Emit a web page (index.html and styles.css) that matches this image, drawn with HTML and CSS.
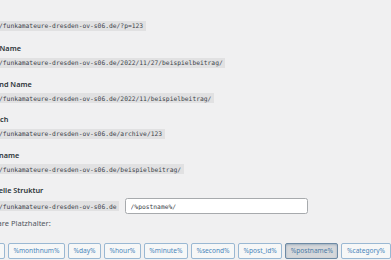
FILE: index.html
```
<!DOCTYPE html>
<html lang="de">
<head>
	<meta charset="UTF-8">
	<title>Permalink-Einstellungen</title>
	<link rel="stylesheet" href="styles.css">
</head>
<body>
	<div class="wrap">
		<fieldset class="structures">
			<div class="row">
				<label><input type="radio" name="selection">Einfach</label>
				<p><code>https://funkamateure-dresden-ov-s06.de/?p=123</code></p>
			</div>
			<div class="row">
				<label><input type="radio" name="selection">Tag und Name</label>
				<p><code>https://funkamateure-dresden-ov-s06.de/2022/11/27/beispielbeitrag/</code></p>
			</div>
			<div class="row">
				<label><input type="radio" name="selection">Monat und Name</label>
				<p><code>https://funkamateure-dresden-ov-s06.de/2022/11/beispielbeitrag/</code></p>
			</div>
			<div class="row">
				<label><input type="radio" name="selection">Numerisch</label>
				<p><code>https://funkamateure-dresden-ov-s06.de/archive/123</code></p>
			</div>
			<div class="row">
				<label><input type="radio" name="selection">Beitragsname</label>
				<p><code>https://funkamateure-dresden-ov-s06.de/beispielbeitrag/</code></p>
			</div>
			<div class="row custom">
				<label><input type="radio" name="selection" checked>Individuelle Struktur</label>
				<p class="custom-line"><code>https://funkamateure-dresden-ov-s06.de</code><input type="text" class="structure" value="/%postname%/"></p>
			</div>
			<div class="tags">
				<p class="tags-title">Verfügbare Platzhalter:</p>
				<ul>
					<li><button>%year%</button></li>
					<li><button>%monthnum%</button></li>
					<li><button>%day%</button></li>
					<li><button>%hour%</button></li>
					<li><button>%minute%</button></li>
					<li><button>%second%</button></li>
					<li><button>%post_id%</button></li>
					<li><button class="active">%postname%</button></li>
					<li><button>%category%</button></li>
					<li><button>%author%</button></li>
				</ul>
			</div>
		</fieldset>
	</div>
</body>
</html>
```

FILE: styles.css
```
*{margin: 0;padding: 0;box-sizing: border-box;}
html,body{height: 100%;}
body{background: #f0f0f1;overflow: hidden;font-family: "Noto Sans", "Liberation Sans", sans-serif;color: #2c3338;}
.wrap{margin-left: -31.5px;padding-top: 7.5px;width: 900px;}
.structures{border: 0;display: flex;flex-direction: column;gap: 11px;}
.row{display: flex;flex-direction: column;gap: 4.5px;}
.row:first-child{gap: 3px;margin-bottom: 1.5px;}
.row label{display: block;height: 10px;line-height: 10px;padding-left: 1px;font-size: 7.3px;font-weight: 600;color: #2c3338;white-space: nowrap;}
.row label input{display: none;}
.row p{display: flex;height: 10px;}
code{display: block;height: 10px;padding: 1.5px 2.5px 0 4px;line-height: 8px;font-family: "DejaVu Sans Mono", "Liberation Mono", monospace;font-size: 6.3px;background: #e1e1e2;color: #3c434a;white-space: nowrap;}
.custom{gap: 3px;}
.row .custom-line{align-items: center;gap: 5.5px;height: 16px;}
.structure{width: 183px;height: 16px;padding: 0 5px;border: 1px solid #a7aaad;border-radius: 2.5px;background: #fff;font-family: "DejaVu Sans Mono", "Liberation Mono", monospace;font-size: 6.3px;color: #3c434a;outline: none;}
.tags{display: flex;flex-direction: column;gap: 8px;margin-top: -7px;padding-left: 1px;}
.tags-title{height: 10px;line-height: 10px;font-size: 7.5px;color: #50575e;}
.tags ul{display: flex;gap: 3px;list-style: none;}
.tags button{height: 16px;padding: 0 4.5px;border: 1px solid #9ab8d3;border-radius: 2px;background: #f6f7f7;color: #4a86bb;font-family: "Noto Sans", "Liberation Sans", sans-serif;font-size: 6.6px;white-space: nowrap;cursor: pointer;}
.tags button.active{background: #d5d7da;border-color: #6d8aa5;color: #4a7aa6;box-shadow: inset 0 1px 3px -1px #6d8aa5;}
```
